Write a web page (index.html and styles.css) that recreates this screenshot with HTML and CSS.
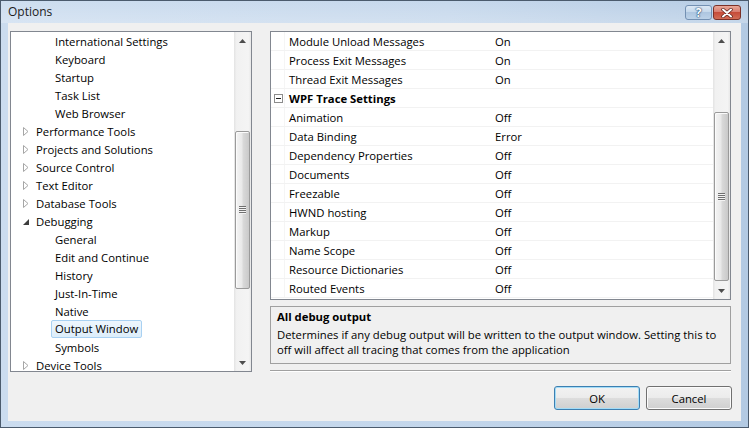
FILE: index.html
```html
<!DOCTYPE html>
<html>
<head>
<meta charset="utf-8">
<title>Options</title>
<link rel="stylesheet" href="styles.css">
</head>
<body>
<div class="window">
  <div class="titlebar">
    <span class="title">Options</span>
    <div class="caption-buttons">
      <div class="cbtn help">?</div>
      <div class="cbtn close">
        <svg width="14" height="10" viewBox="0 0 14 10"><path d="M3 1.5 L11 8.5 M11 1.5 L3 8.5" stroke="#5a1e18" stroke-width="3.4" stroke-linecap="round"/><path d="M3 1.5 L11 8.5 M11 1.5 L3 8.5" stroke="#ffffff" stroke-width="2" stroke-linecap="round"/></svg>
      </div>
    </div>
  </div>
  <div class="client">
    <div class="main">
      <div class="tree">
        <div class="tree-list">
          <div class="trow l2">International Settings</div>
          <div class="trow l2">Keyboard</div>
          <div class="trow l2">Startup</div>
          <div class="trow l2">Task List</div>
          <div class="trow l2">Web Browser</div>
          <div class="trow l1"><span class="arrow"><svg width="6" height="9" viewBox="0 0 6 9"><path d="M0.5 0.5 L5 4.5 L0.5 8.5 Z" fill="#fff" stroke="#a6a6a6"/></svg></span>Performance Tools</div>
          <div class="trow l1"><span class="arrow"><svg width="6" height="9" viewBox="0 0 6 9"><path d="M0.5 0.5 L5 4.5 L0.5 8.5 Z" fill="#fff" stroke="#a6a6a6"/></svg></span>Projects and Solutions</div>
          <div class="trow l1"><span class="arrow"><svg width="6" height="9" viewBox="0 0 6 9"><path d="M0.5 0.5 L5 4.5 L0.5 8.5 Z" fill="#fff" stroke="#a6a6a6"/></svg></span>Source Control</div>
          <div class="trow l1"><span class="arrow"><svg width="6" height="9" viewBox="0 0 6 9"><path d="M0.5 0.5 L5 4.5 L0.5 8.5 Z" fill="#fff" stroke="#a6a6a6"/></svg></span>Text Editor</div>
          <div class="trow l1"><span class="arrow"><svg width="6" height="9" viewBox="0 0 6 9"><path d="M0.5 0.5 L5 4.5 L0.5 8.5 Z" fill="#fff" stroke="#a6a6a6"/></svg></span>Database Tools</div>
          <div class="trow l1"><span class="arrow"><svg width="6" height="9" viewBox="0 0 6 9"><path d="M6 2 L6 8 L0 8 Z" fill="#3d3d3d"/></svg></span>Debugging</div>
          <div class="trow l2">General</div>
          <div class="trow l2">Edit and Continue</div>
          <div class="trow l2">History</div>
          <div class="trow l2">Just-In-Time</div>
          <div class="trow l2">Native</div>
          <div class="trow l2"><span class="sel">Output Window</span></div>
          <div class="trow l2">Symbols</div>
          <div class="trow l1"><span class="arrow"><svg width="6" height="9" viewBox="0 0 6 9"><path d="M0.5 0.5 L5 4.5 L0.5 8.5 Z" fill="#fff" stroke="#a6a6a6"/></svg></span>Device Tools</div>
        </div>
        <div class="vscroll">
          <div class="sb-btn"><svg width="7" height="4" viewBox="0 0 7 4"><path d="M0 4 L3.5 0 L7 4 Z" fill="#4d4d4d"/></svg></div>
          <div class="thumb tree-thumb"><span class="grip"></span></div>
          <div class="sb-btn sb-down"><svg width="7" height="4" viewBox="0 0 7 4"><path d="M0 0 L7 0 L3.5 4 Z" fill="#4d4d4d"/></svg></div>
        </div>
      </div>
      <div class="right">
        <div class="grid">
          <div class="grid-rows">
            <div class="grow"><div class="gm"></div><div class="gn">Module Unload Messages</div><div class="gv">On</div></div>
            <div class="grow"><div class="gm"></div><div class="gn">Process Exit Messages</div><div class="gv">On</div></div>
            <div class="grow"><div class="gm"></div><div class="gn">Thread Exit Messages</div><div class="gv">On</div></div>
            <div class="grow cat"><div class="gm"><svg width="9" height="9" viewBox="0 0 9 9"><rect x="0.5" y="0.5" width="8" height="8" fill="#fff" stroke="#8c8c8c"/><path d="M2 4.5 H7" stroke="#1e1e1e"/></svg></div><div class="gn">WPF Trace Settings</div><div class="gv"></div></div>
            <div class="grow"><div class="gm"></div><div class="gn">Animation</div><div class="gv">Off</div></div>
            <div class="grow"><div class="gm"></div><div class="gn">Data Binding</div><div class="gv">Error</div></div>
            <div class="grow"><div class="gm"></div><div class="gn">Dependency Properties</div><div class="gv">Off</div></div>
            <div class="grow"><div class="gm"></div><div class="gn">Documents</div><div class="gv">Off</div></div>
            <div class="grow"><div class="gm"></div><div class="gn">Freezable</div><div class="gv">Off</div></div>
            <div class="grow"><div class="gm"></div><div class="gn">HWND hosting</div><div class="gv">Off</div></div>
            <div class="grow"><div class="gm"></div><div class="gn">Markup</div><div class="gv">Off</div></div>
            <div class="grow"><div class="gm"></div><div class="gn">Name Scope</div><div class="gv">Off</div></div>
            <div class="grow"><div class="gm"></div><div class="gn">Resource Dictionaries</div><div class="gv">Off</div></div>
            <div class="grow"><div class="gm"></div><div class="gn">Routed Events</div><div class="gv">Off</div></div>
          </div>
          <div class="vscroll">
            <div class="sb-btn"><svg width="7" height="4" viewBox="0 0 7 4"><path d="M0 4 L3.5 0 L7 4 Z" fill="#4d4d4d"/></svg></div>
            <div class="thumb grid-thumb"><span class="grip"></span></div>
            <div class="sb-btn sb-down"><svg width="7" height="4" viewBox="0 0 7 4"><path d="M0 0 L7 0 L3.5 4 Z" fill="#4d4d4d"/></svg></div>
          </div>
        </div>
        <div class="desc">
          <div class="desc-title">All debug output</div>
          <div class="desc-text">Determines if any debug output will be written to the output window. Setting this to<br>off will affect all tracing that comes from the application</div>
        </div>
        <div class="sep"></div>
      </div>
    </div>
    <div class="buttons">
      <div class="btn default">OK</div>
      <div class="btn">Cancel</div>
    </div>
  </div>
</div>
</body>
</html>
```

FILE: styles.css
```css
* { box-sizing: border-box; }

body {
  margin: 0;
  width: 749px;
  height: 428px;
  overflow: hidden;
  font-family: "Open Sans", "Noto Sans", sans-serif;
  font-size: 11.3px;
  color: #000;
}

.window {
  width: 749px;
  height: 428px;
  border: 1px solid #4b5b6d;
  background: linear-gradient(to right, #cbdcef 0%, #c3d6eb 60%, #b3cae3 100%);
  display: flex;
  flex-direction: column;
}

.titlebar {
  height: 22px;
  display: flex;
  align-items: flex-start;
  padding-left: 7px;
  background: linear-gradient(to bottom, rgba(255,255,255,0.05), rgba(255,255,255,0.25));
}

.title {
  font-size: 12px;
  color: #1b1b1b;
  line-height: 22px;
}

.caption-buttons {
  margin-left: auto;
  margin-right: 7px;
  margin-top: 4px;
  display: flex;
  gap: 1px;
}

.cbtn {
  height: 15px;
  border-radius: 3px;
  display: flex;
  align-items: center;
  justify-content: center;
}

.help {
  width: 27px;
  border: 1px solid #7390b2;
  background: linear-gradient(to bottom, #dce8f4 0%, #c2d6ea 50%, #aec6e0 50%, #bcd2e8 100%);
  color: #fff;
  font-weight: bold;
  font-size: 12px;
  line-height: 13px;
  text-shadow: 0 0 1px #2c4f7a, 0 0 1px #2c4f7a, 0 0 2px #2c4f7a;
}

.close {
  width: 28px;
  border: 1px solid #7b3027;
  background: linear-gradient(to bottom, #e9a899 0%, #d6776a 50%, #c64c3a 50%, #d26c55 100%);
}

.client {
  flex: 1;
  margin: 0 7px 6px 7px;
  background: #f0f0f0;
  padding: 8px 10px 0 2px;
  display: flex;
  flex-direction: column;
}

.main {
  display: flex;
  gap: 18px;
  height: 341px;
}

.tree {
  width: 242px;
  border: 1px solid #828790;
  background: #fff;
  display: flex;
}

.tree-list {
  flex: 1;
  overflow: hidden;
}

.trow {
  height: 18px;
  display: flex;
  align-items: center;
  white-space: nowrap;
}

.trow.l1 { padding-left: 12px; }
.trow.l2 { padding-left: 44px; }

.arrow {
  width: 8px;
  margin-right: 5px;
  display: flex;
  align-items: center;
}

.sel {
  height: 18px;
  line-height: 16px;
  padding: 0 3px;
  margin-left: -4px;
  border: 1px solid #a9d1f2;
  border-radius: 2px;
  background: linear-gradient(to bottom, #eef6fd, #ddeefa);
}

.vscroll {
  width: 17px;
  background: linear-gradient(to right, #e3e3e3 0%, #f1f1f1 15%, #f4f4f4 85%, #e8e8e8 100%);
  display: flex;
  flex-direction: column;
}

.sb-btn {
  height: 17px;
  display: flex;
  align-items: center;
  justify-content: center;
}

.sb-down { margin-top: auto; }

.thumb {
  margin-left: 1px;
  margin-right: 1px;
  border: 1px solid #9a9a9a;
  border-radius: 2px;
  background: linear-gradient(to right, #f4f4f4 0%, #e9e9e9 45%, #d9d9d9 55%, #c9c9c9 100%);
  display: flex;
  align-items: center;
  justify-content: center;
  box-shadow: inset 1px 1px 0 #fbfbfb;
}

.tree-thumb { margin-top: 82px; height: 158px; }
.grid-thumb { margin-top: 63px; height: 169px; }

.grip {
  width: 7px;
  height: 8px;
  background: repeating-linear-gradient(to bottom, #6f6f6f 0, #6f6f6f 1px, #f3f3f3 1px, #f3f3f3 2px);
}

.right {
  width: 461px;
  display: flex;
  flex-direction: column;
}

.grid {
  height: 269px;
  border: 1px solid #828790;
  background: #fff;
  display: flex;
}

.grid-rows {
  flex: 1;
  overflow: hidden;
}

.grow {
  height: 19px;
  display: flex;
  border-bottom: 1px solid #f2f2f2;
  white-space: nowrap;
}

.gm {
  width: 14px;
  border-right: 1px solid #f5f5f5;
  display: flex;
  align-items: center;
  justify-content: center;
  padding-left: 2px;
}

.gn {
  width: 207px;
  padding-left: 4px;
  display: flex;
  align-items: center;
}

.gv {
  flex: 1;
  padding-left: 3px;
  display: flex;
  align-items: center;
}

.cat .gn { font-weight: bold; }

.desc {
  margin-top: 6px;
  height: 58px;
  border: 1px solid #a0a0a0;
  padding: 2px 6px 0 6px;
  line-height: 15px;
}

.desc-title {
  font-weight: bold;
  margin-bottom: 3px;
}

.desc-text { white-space: nowrap; }

.sep {
  margin-top: 6px;
  height: 2px;
  border-top: 1px solid #a0a0a0;
  border-bottom: 1px solid #ffffff;
}

.buttons {
  display: flex;
  justify-content: flex-end;
  gap: 6px;
  margin-top: 14px;
  margin-right: -1px;
}

.btn {
  width: 86px;
  height: 24px;
  border: 1px solid #707070;
  border-radius: 3px;
  background: linear-gradient(to bottom, #f2f2f2 0%, #ebebeb 50%, #dddddd 50%, #cfcfcf 100%);
  box-shadow: inset 0 0 0 1px #fbfbfb;
  display: flex;
  align-items: center;
  justify-content: center;
}

.btn.default {
  border-color: #3c7fb1;
  box-shadow: inset 0 0 0 1px #a3dcf7;
}
```
